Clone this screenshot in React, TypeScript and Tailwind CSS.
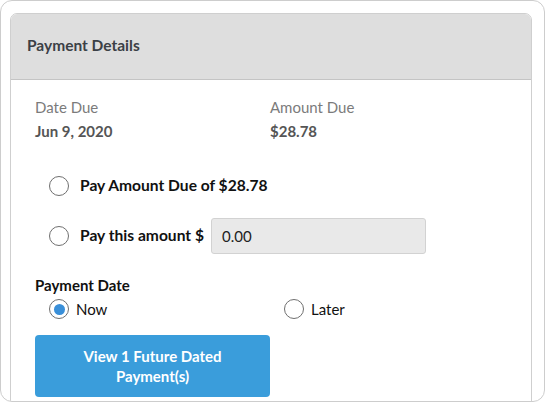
export default function App() {
  return (
    <div className="w-[545px] h-[402px] bg-white">
      <div
        className="w-[545px] h-[402px] rounded-[12px] border border-[#cdcdcd] overflow-hidden"
        style={{ fontFamily: "Lato, 'Open Sans', sans-serif" }}
      >
        <div className="ml-[9px] mt-[12px] w-[522px] h-[400px] rounded-t-[7px] border border-[#cfcfcf] overflow-hidden">
          <div className="h-[66px] bg-[#dedede] border-b border-[#c4c4c4] flex items-center pl-[16px] pb-[1px]">
            <h2 className="text-[15.5px] font-bold text-[#3b4046]">Payment Details</h2>
          </div>

          <div className="pl-[24px] pt-[16px]">
            <div className="flex text-[15px] leading-[22px]">
              <div className="w-[235px]">
                <div className="text-[#7b7b7b]">Date Due</div>
                <div className="mt-[2px] font-bold text-[#555]">Jun 9, 2020</div>
              </div>
              <div>
                <div className="text-[#7b7b7b]">Amount Due</div>
                <div className="mt-[2px] font-bold text-[#555]">$28.78</div>
              </div>
            </div>

            <div className="mt-[33px] ml-[14px] flex items-center h-[22px]">
              <Radio />
              <span className="ml-[11px] text-[15.6px] font-bold text-[#111]">Pay Amount Due of $28.78</span>
            </div>

            <div className="mt-[21px] ml-[14px] flex items-center">
              <Radio />
              <span className="ml-[11px] text-[15.6px] font-bold text-[#111]">Pay this amount $</span>
              <div className="ml-[7px] w-[215px] h-[36px] rounded-[3px] border border-[#d2d2d2] bg-[#e9e9e9] flex items-center pl-[10px] text-[15px] text-[#222]">
                0.00
              </div>
            </div>

            <div className="mt-[20px] text-[15px] font-bold leading-[22px] text-[#111]">Payment Date</div>
            <div className="mt-[2px] ml-[14px] flex items-center h-[22px] text-[15px] text-[#111]">
              <div className="flex items-center w-[235px]">
                <Radio checked />
                <span className="ml-[7px]">Now</span>
              </div>
              <div className="flex items-center">
                <Radio />
                <span className="ml-[7px]">Later</span>
              </div>
            </div>

            <button className="mt-[15px] w-[235px] h-[62px] rounded-[4px] bg-[#3a9ddb] text-white text-[15px] font-bold leading-[20px] flex flex-col items-center justify-center">
              <span>View 1 Future Dated</span>
              <span>Payment(s)</span>
            </button>
          </div>
        </div>
      </div>
    </div>
  );
}

function Radio({ checked = false }: { checked?: boolean }) {
  return (
    <span className="w-[20px] h-[20px] rounded-full border border-[#6f6f6f] bg-white flex items-center justify-center shrink-0">
      {checked && <span className="w-[11px] h-[11px] rounded-full bg-[#3a8fd8]" />}
    </span>
  );
}
